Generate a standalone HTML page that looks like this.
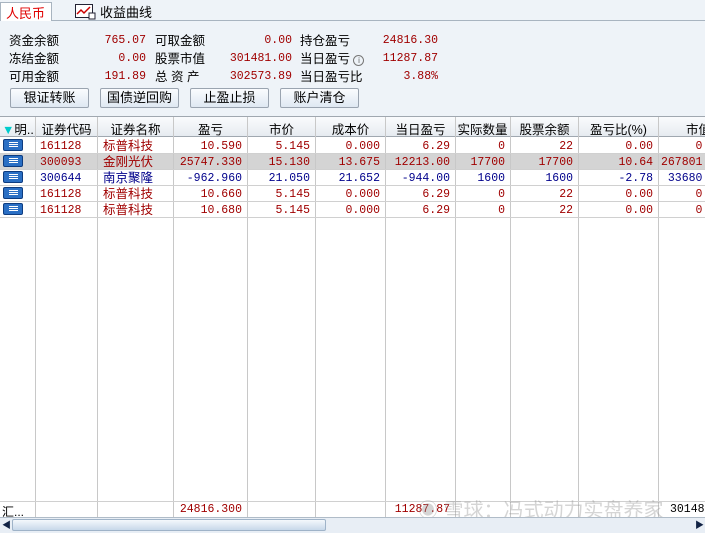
<!DOCTYPE html><html><head><meta charset="utf-8"><style>
*{margin:0;padding:0;box-sizing:border-box}
body{width:705px;height:533px;overflow:hidden;background:#fff;font-family:"Liberation Sans","Noto Sans CJK SC",sans-serif;font-size:12px;position:relative;color:#000}
.a{position:absolute;white-space:nowrap}
.n{font-family:"Liberation Mono",monospace;font-size:11.5px}
.r{color:#a00000}.b{color:#00008b}
.btn{position:absolute;top:88px;height:20px;border:1px solid #9aa4b0;background:linear-gradient(#fafcfe,#dfe8f2);text-align:center;line-height:18px;font-size:13px;border-radius:2px}
.vl{position:absolute;top:117px;width:1px;height:400px;background:#c8c8c8}
.hl{position:absolute;left:0;width:705px;height:1px;background:#d0d0d0}
.ic{position:absolute;left:3px;width:20px;height:12px;background:#2a6fc4;border:1px solid #0d3c80;border-radius:2px}
.ic:after{content:"";position:absolute;left:5px;top:2px;width:9px;height:6px;background:repeating-linear-gradient(#fff 0 1px,transparent 1px 2px)}
</style></head><body>
<div class="a" style="left:0;top:0;width:705px;height:116px;background:#eef3f8"></div>
<div class="a" style="left:0;top:20px;width:705px;height:1px;background:#a8b4c0"></div>
<div class="a" style="left:0;top:2px;width:52px;height:19px;background:#fff;border:1px solid #a8b4c0;border-bottom:none;"></div>
<div class="a" style="left:6px;top:3px;color:#e00000;font-size:13px">人民币</div>
<svg class="a" style="left:75px;top:4px" width="22" height="16"><rect x="0.5" y="0.5" width="17" height="13" fill="#fff" stroke="#223"/><polyline points="2,10 6,6 9,9 15,3" fill="none" stroke="#c00" stroke-width="1.5"/><rect x="14" y="9" width="6" height="6" fill="#fff" stroke="#223"/></svg>
<div class="a" style="left:100px;top:2px;font-size:13px">收益曲线</div>
<div class="a" style="left:9px;top:32px;line-height:18px;font-size:12.5px">资金余额<br>冻结金额<br>可用金额</div>
<div class="a n r" style="left:60px;top:32px;width:86px;text-align:right;line-height:18px">765.07<br>0.00<br>191.89</div>
<div class="a" style="left:155px;top:32px;line-height:18px;font-size:12.5px">可取金额<br>股票市值<br>总&nbsp;资&nbsp;产</div>
<div class="a n r" style="left:200px;top:32px;width:92px;text-align:right;line-height:18px">0.00<br>301481.00<br>302573.89</div>
<div class="a" style="left:300px;top:32px;line-height:18px;font-size:12.5px">持仓盈亏<br>当日盈亏 <span style="display:inline-block;width:11px;height:11px;border:1px solid #777;border-radius:50%;font-size:8px;line-height:9px;text-align:center;color:#666">i</span><br>当日盈亏比</div>
<div class="a n r" style="left:360px;top:32px;width:78px;text-align:right;line-height:18px">24816.30<br>11287.87<br>3.88%</div>
<div class="btn" style="left:10px;width:79px">银证转账</div>
<div class="btn" style="left:100px;width:79px">国债逆回购</div>
<div class="btn" style="left:190px;width:79px">止盈止损</div>
<div class="btn" style="left:280px;width:79px">账户清仓</div>
<div class="a" style="left:0;top:116px;width:705px;height:21px;background:linear-gradient(#fafbfd,#e6ebf0);border-top:1px solid #a0a8b0;border-bottom:1px solid #a0a8b0"></div>
<div class="a" style="left:0;top:153px;width:705px;height:16px;background:#d4d4d4"></div>
<div class="vl" style="left:35px"></div><div class="vl" style="left:97px"></div><div class="vl" style="left:173px"></div><div class="vl" style="left:247px"></div><div class="vl" style="left:315px"></div><div class="vl" style="left:385px"></div><div class="vl" style="left:455px"></div><div class="vl" style="left:510px"></div><div class="vl" style="left:578px"></div><div class="vl" style="left:658px"></div>
<div class="hl" style="top:153px"></div><div class="hl" style="top:169px"></div><div class="hl" style="top:185px"></div><div class="hl" style="top:201px"></div><div class="hl" style="top:217px"></div><div class="hl" style="top:501px"></div>
<div class="a" style="left:2px;top:119px;font-size:12.5px"><span style="color:#0cc">▼</span>明..</div>
<div class="a" style="left:36px;top:119px;width:61px;text-align:center;font-size:12.5px">证券代码</div>
<div class="a" style="left:98px;top:119px;width:75px;text-align:center;font-size:12.5px">证券名称</div>
<div class="a" style="left:174px;top:119px;width:73px;text-align:center;font-size:12.5px">盈亏</div>
<div class="a" style="left:248px;top:119px;width:67px;text-align:center;font-size:12.5px">市价</div>
<div class="a" style="left:316px;top:119px;width:69px;text-align:center;font-size:12.5px">成本价</div>
<div class="a" style="left:386px;top:119px;width:69px;text-align:center;font-size:12.5px">当日盈亏</div>
<div class="a" style="left:455px;top:119px;width:55px;text-align:center;font-size:12.5px">实际数量</div>
<div class="a" style="left:511px;top:119px;width:67px;text-align:center;font-size:12.5px">股票余额</div>
<div class="a" style="left:579px;top:119px;width:79px;text-align:center;font-size:12.5px">盈亏比(%)</div>
<div class="a" style="left:686px;top:119px;font-size:12.5px">市值</div>
<div class="ic" style="top:139px"></div><div class="ic" style="top:155px"></div><div class="ic" style="top:171px"></div><div class="ic" style="top:187px"></div><div class="ic" style="top:203px"></div>
<div class="a n r" style="left:40px;top:139px;line-height:16px">161128<br><span>300093</span><br><span class="b">300644</span><br>161128<br>161128</div>
<div class="a r" style="left:103px;top:138px;line-height:16px;font-size:12.5px">标普科技<br>金刚光伏<br><span class="b">南京聚隆</span><br>标普科技<br>标普科技</div>
<div class="a n r" style="left:174px;top:139px;width:68px;text-align:right;line-height:16px">10.590<br>25747.330<br><span class="b">-962.960</span><br>10.660<br>10.680</div>
<div class="a n r" style="left:248px;top:139px;width:62px;text-align:right;line-height:16px">5.145<br>15.130<br><span class="b">21.050</span><br>5.145<br>5.145</div>
<div class="a n r" style="left:316px;top:139px;width:64px;text-align:right;line-height:16px">0.000<br>13.675<br><span class="b">21.652</span><br>0.000<br>0.000</div>
<div class="a n r" style="left:386px;top:139px;width:64px;text-align:right;line-height:16px">6.29<br>12213.00<br><span class="b">-944.00</span><br>6.29<br>6.29</div>
<div class="a n r" style="left:456px;top:139px;width:49px;text-align:right;line-height:16px">0<br>17700<br><span class="b">1600</span><br>0<br>0</div>
<div class="a n r" style="left:511px;top:139px;width:62px;text-align:right;line-height:16px">22<br>17700<br><span class="b">1600</span><br>22<br>22</div>
<div class="a n r" style="left:579px;top:139px;width:74px;text-align:right;line-height:16px">0.00<br>10.64<br><span class="b">-2.78</span><br>0.00<br>0.00</div>
<div class="a n r" style="left:661px;top:139px;line-height:16px">&nbsp;&nbsp;&nbsp;&nbsp;&nbsp;0<br>267801<br><span class="b">&nbsp;33680</span><br>&nbsp;&nbsp;&nbsp;&nbsp;&nbsp;0<br>&nbsp;&nbsp;&nbsp;&nbsp;&nbsp;0</div>
<div class="a" style="left:2px;top:503px">汇...</div>
<div class="a n r" style="left:174px;top:503px;width:68px;text-align:right">24816.300</div>
<div class="a n r" style="left:386px;top:503px;width:64px;text-align:right">11287.87</div>
<div class="a n" style="left:670px;top:503px">301481</div>
<div class="a" style="left:418px;top:494px;font-size:20px;color:rgba(150,150,150,.4)">◉ 雪球：冯式动力实盘养家</div>
<div class="a" style="left:0;top:517px;width:705px;height:16px;background:#e8eef5;border-top:1px solid #b0bcc8"></div>
<div class="a" style="left:12px;top:519px;width:314px;height:12px;background:linear-gradient(#f4f8fc,#c8d8ea);border:1px solid #9fb3c8;border-radius:2px"></div>
<div class="a" style="left:2px;top:518px;font-size:9px;color:#124">◀</div>
<div class="a" style="left:695px;top:518px;font-size:9px;color:#124">▶</div>
</body></html>
